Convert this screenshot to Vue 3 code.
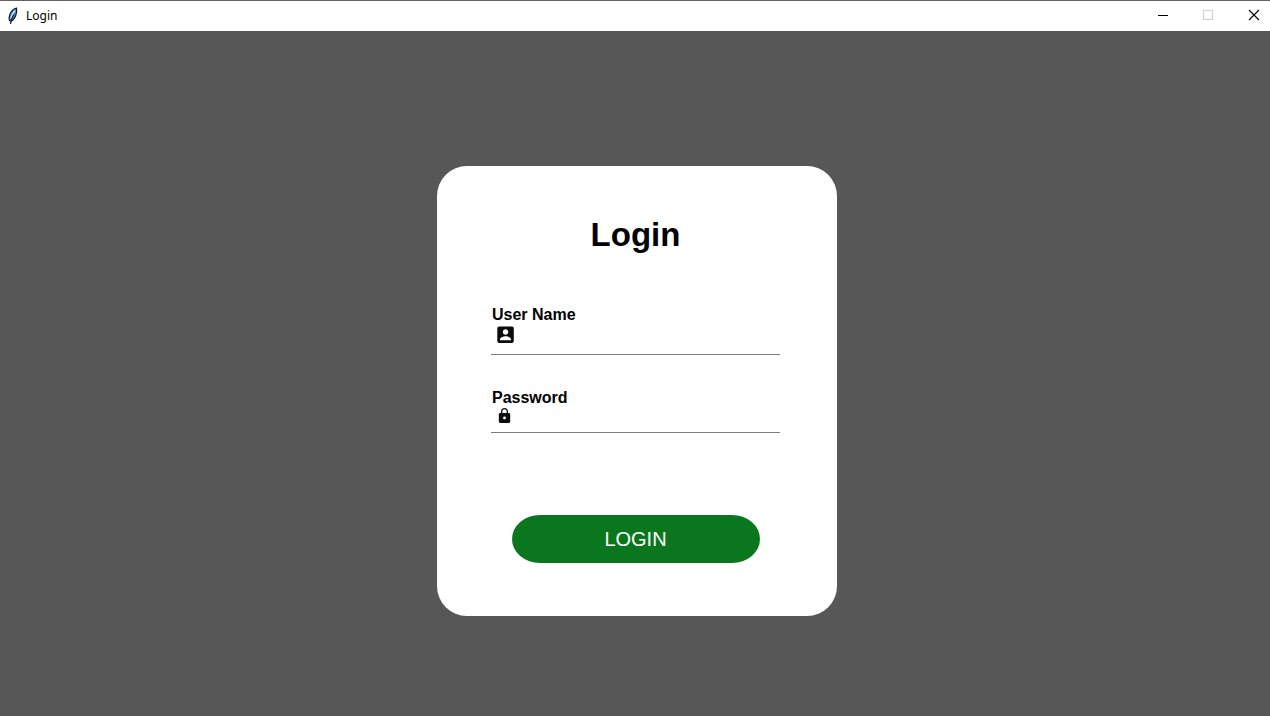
<script setup>
import { ref } from 'vue'

const username = ref('')
const password = ref('')
</script>

<template>
  <div class="window">
    <header class="titlebar">
      <svg class="feather" width="12" height="18" viewBox="0 0 12 18" aria-hidden="true">
        <path d="M9.500 1.200C6.500 2 3.700 5 2.700 8c-.7 2-.7 4-.2 5.600l1.500.6c1.900-.8 3.600-2.600 4.600-5.200C9.500 6.500 10 4 9.500 1.200Z" fill="#4f92dc" stroke="#14181f" stroke-width="1.200" />
        <path d="M7.800 3.500C5.800 6 4.300 9 3.600 12" fill="none" stroke="#b9dcfa" stroke-width="1.400" />
        <path d="M7 7.500C5.200 10 3.900 13 3.500 17" fill="none" stroke="#15171c" stroke-width="1.200" />
      </svg>
      <span class="caption">Login</span>
      <div class="controls">
        <button type="button" aria-label="Minimize">
          <svg width="12" height="12" viewBox="0 0 12 12"><path d="M2 6.500h10" stroke="#000" /></svg>
        </button>
        <button type="button" aria-label="Maximize" disabled>
          <svg width="12" height="12" viewBox="0 0 12 12"><rect x="1.500" y="1.500" width="9" height="9" fill="none" stroke="#ccc" /></svg>
        </button>
        <button type="button" aria-label="Close">
          <svg width="12" height="12" viewBox="0 0 12 12"><path d="M1 1l10 10M11 1L1 11" stroke="#000" stroke-width="1.100" /></svg>
        </button>
      </div>
    </header>

    <main class="stage">
      <form class="card" @submit.prevent>
        <h1>Login</h1>

        <label for="username">User Name</label>
        <div class="field user">
          <svg width="22" height="22" viewBox="0.500 1.500 24 24" aria-hidden="true">
            <path fill="#0b0b0b" d="M3 5v14a2 2 0 0 0 2 2h14c1.100 0 2-.9 2-2V5c0-1.100-.9-2-2-2H5a2 2 0 0 0-2 2zm12 4c0 1.660-1.340 3-3 3s-3-1.340-3-3 1.340-3 3-3 3 1.340 3 3zm-9 8c0-2 4-3.100 6-3.100s6 1.100 6 3.100v1H6v-1z" />
          </svg>
          <input id="username" v-model="username" type="text" autocomplete="username" />
        </div>

        <label for="password">Password</label>
        <div class="field pass">
          <svg width="17" height="17" viewBox="0 1 24 24" aria-hidden="true">
            <path fill="#0b0b0b" d="M18 8h-1V6c0-2.760-2.240-5-5-5S7 3.240 7 6v2H6c-1.100 0-2 .9-2 2v10c0 1.100.9 2 2 2h12c1.100 0 2-.9 2-2V10c0-1.100-.9-2-2-2zm-6 9c-1.100 0-2-.9-2-2s.9-2 2-2 2 .9 2 2-.9 2-2 2zm3.100-9H8.900V6c0-1.710 1.390-3.100 3.100-3.100s3.100 1.390 3.100 3.100v2z" />
          </svg>
          <input id="password" v-model="password" type="password" autocomplete="current-password" />
        </div>

        <button class="submit" type="submit">LOGIN</button>
      </form>
    </main>
  </div>
</template>

<style>
body {
  margin: 0;
}
</style>

<style scoped>
.window {
  box-sizing: border-box;
  display: flex;
  flex-direction: column;
  min-height: 100vh;
  background: #575757;
  color: #000;
  font-family: "Liberation Sans", Arial, sans-serif;
}

.titlebar {
  box-sizing: border-box;
  display: flex;
  align-items: center;
  height: 31px;
  padding-left: 7px;
  border-top: 1px solid #626262;
  background: #fff;
}

.feather {
  margin-right: 7px;
}

.caption {
  font: 12px/16px "Noto Sans", sans-serif;
}

.controls {
  display: flex;
  align-self: stretch;
  margin-left: auto;
  margin-right: -7px;
}

.controls button {
  display: flex;
  align-items: center;
  justify-content: center;
  width: 46px;
  padding: 0 0 2px;
  border: 0;
  background: none;
}

.stage {
  display: flex;
  flex: 1;
  align-items: center;
  justify-content: center;
  padding: 35px 0 0 4px;
}

.card {
  box-sizing: border-box;
  display: flex;
  flex-direction: column;
  width: 400px;
  padding: 49px 57px 53px 54px;
  border-radius: 30px;
  background: #fff;
}

h1 {
  margin: 0 0 50px;
  font-size: 33px;
  line-height: 40px;
  text-align: center;
}

label {
  padding-left: 1px;
  font-size: 16px;
  font-weight: bold;
  line-height: 20px;
}

.field {
  display: flex;
  align-items: flex-start;
  box-sizing: border-box;
  border-bottom: 1px solid #7d7d7d;
}

.field svg {
  flex: none;
}

.field input {
  flex: 1;
  align-self: stretch;
  min-width: 0;
  padding: 0 6px;
  border: 0;
  outline: 0;
  background: none;
  font: 16px/20px "Liberation Sans", Arial, sans-serif;
}

.user {
  height: 30px;
  margin-bottom: 33px;
  padding-left: 4px;
}

.pass {
  height: 25px;
  margin-bottom: 82px;
  padding-left: 5px;
}

.submit {
  align-self: center;
  width: 248px;
  height: 48px;
  padding: 0;
  border: 0;
  border-radius: 28px / 24px;
  background: #0a771f;
  color: #fff;
  font: 20px/24px "Liberation Sans", Arial, sans-serif;
}
</style>
